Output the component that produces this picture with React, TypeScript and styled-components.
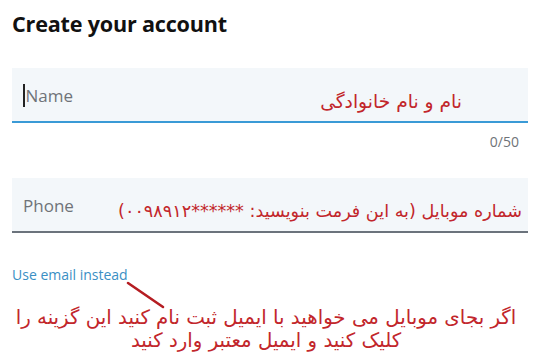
import styled, { createGlobalStyle } from 'styled-components';

const Global = createGlobalStyle`
  html, body {
    margin: 0;
    padding: 0;
    background: #ffffff;
  }
  body {
    font-family: "Open Sans", "Noto Sans", sans-serif;
  }
`;

const Page = styled.div`
  position: relative;
  width: 550px;
  height: 358px;
  padding: 8px 22px 0 12px;
  box-sizing: border-box;
  overflow: hidden;
`;

const Title = styled.h1`
  margin: 0;
  font-family: "Open Sans", sans-serif;
  font-weight: 700;
  font-size: 21.6px;
  letter-spacing: -0.2px;
  color: #111;
  line-height: 32px;
`;

const Field = styled.div<{ $line: string; $top: number }>`
  margin-top: ${p => p.$top}px;
  height: 53px;
  background: #f3f7fa;
  border-bottom: 2px solid ${p => p.$line};
  display: flex;
  align-items: center;
  justify-content: space-between;
  padding: 0 0 0 11px;
`;

const Placeholder = styled.span<{ $caret?: boolean }>`
  font-family: "Open Sans", sans-serif;
  font-size: 17px;
  color: #6f7378;
  display: flex;
  align-items: center;
  margin-top: 2px;
  &::before {
    content: '';
    display: ${p => (p.$caret ? 'block' : 'none')};
    width: 1.5px;
    height: 23px;
    background: #222;
    margin-right: 1px;
  }
`;

const Hint = styled.span<{ $right: number; $size: number; $drop: number }>`
  direction: rtl;
  font-family: "DejaVu Sans", sans-serif;
  font-size: ${p => p.$size}px;
  color: #c2262b;
  margin-right: ${p => p.$right}px;
  margin-top: ${p => p.$drop}px;
  white-space: nowrap;
`;

const Counter = styled.div`
  text-align: right;
  padding-right: 9px;
  margin-top: 9px;
  font-size: 14px;
  color: #6f7378;
`;

const Link = styled.a`
  display: inline-block;
  margin-top: 32px;
  font-size: 14px;
  color: #3a8fc4;
  text-decoration: none;
`;

const Note = styled.p`
  margin: 21px 0 0 -8px;
  direction: rtl;
  text-align: center;
  font-family: "DejaVu Sans", sans-serif;
  font-size: 19.8px;
  line-height: 23px;
  color: #c2262b;
  white-space: nowrap;
`;

const Arrow = styled.svg`
  position: absolute;
  left: 125px;
  top: 280px;
`;

export default function App() {
  return (
    <>
      <Global />
      <Page>
        <Title>Create your account</Title>
        <Field $line="#3a9ad6" $top={28}>
          <Placeholder $caret>Name</Placeholder>
          <Hint $right={66} $size={18.7} $drop={13}>نام و نام خانوادگی</Hint>
        </Field>
        <Counter>0/50</Counter>
        <Field $line="#6b737c" $top={27}>
          <Placeholder>Phone</Placeholder>
          <Hint $right={6} $size={17.6} $drop={13}>شماره موبایل (به این فرمت بنویسید: ******۰۰۹۸۹۱۲)</Hint>
        </Field>
        <Link href="#">Use email instead</Link>
        <Note>
          اگر بجای موبایل می خواهید با ایمیل ثبت نام کنید این گزینه را
          <br />
          کلیک کنید و ایمیل معتبر وارد کنید
        </Note>
        <Arrow width="44" height="32" viewBox="0 0 44 32">
          <line x1="3" y1="3" x2="38" y2="27" stroke="#b51d22" strokeWidth="2.6" strokeLinecap="round" />
        </Arrow>
      </Page>
    </>
  );
}
